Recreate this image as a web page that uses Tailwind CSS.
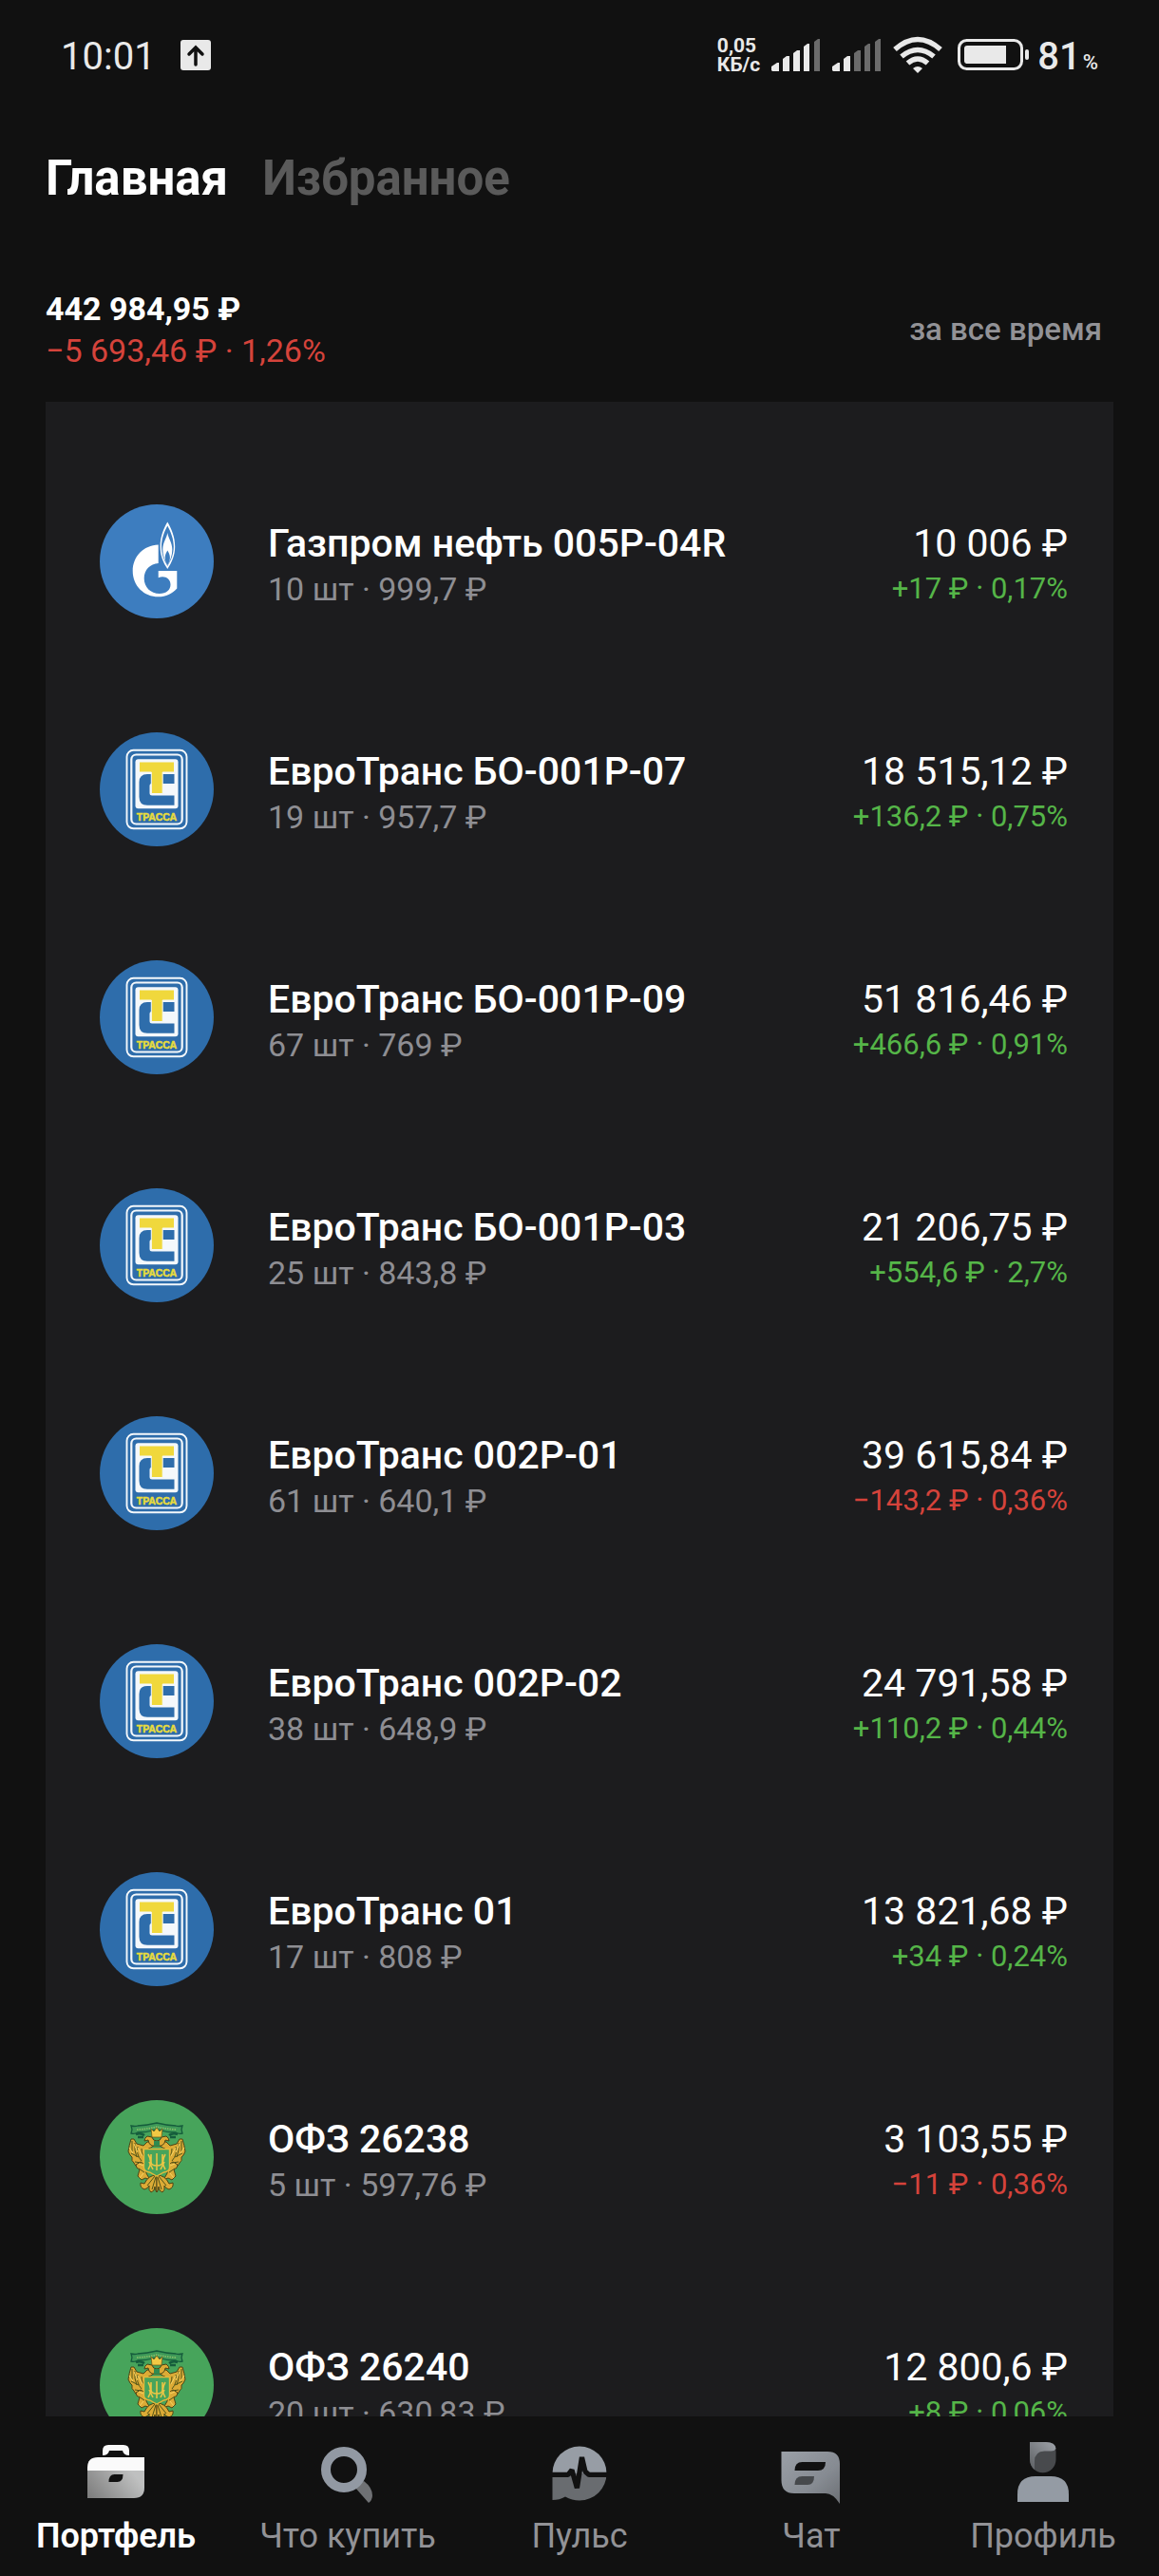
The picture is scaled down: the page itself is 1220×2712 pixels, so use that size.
<!DOCTYPE html>
<html lang="ru">
<head>
  <meta charset="UTF-8" />
  <meta name="viewport" content="width=device-width, initial-scale=1.0" />
  <title>Портфель</title>

  <!-- Tailwind CSS -->
  <script src="https://cdn.jsdelivr.net/npm/@tailwindcss/browser@4"></script>
</head>
<body class="h-screen flex flex-col overflow-hidden bg-[#111111] text-white font-[Roboto,sans-serif]">

  <!-- Logos -->
  <svg class="hidden" aria-hidden="true">
    <symbol id="gazprom" viewBox="0 0 120 120">
      <circle cx="60" cy="60" r="60" fill="#3d7dbf" />
      <path fill="#fff" d="M61.7 42.5C46 43 34.7 55 34.7 70c0 16 12 27.300 27 27.300 8 0 14.5-3.300 19.6-8.800V70H61.700v7.200c6.5-2.700 12.8.8 12.8 7.300 0 5.5-4.5 9.5-11.5 9.5C53.5 94 46.7 87 46.7 78c0-9 6.3-15.5 15-16z" />
      <path fill="#fff" fill-rule="evenodd" d="M71.3 18.5C67 26 63.6 34 63.6 44.5c0 9 3 16.5 7.7 23.5 4.7-7 7.900-14.5 7.900-23.5 0-10.5-3.600-18.500-7.900-26zm0 4c-3.800 7-6.300 14-6.300 22 0 7.500 2.300 14 6.300 20.500 4-6.500 6.500-13 6.500-20.500 0-8-2.700-15-6.500-22z" />
      <path fill="#fff" fill-rule="evenodd" d="M71.3 30c-1 6-5 10-5 17.5 0 6 2 11.5 5 17 3-5.5 5-11 5-17 0-7.5-4-11.5-5-17.5zm0 18.5c-1.300 2.500-2.600 4.500-2.600 7.500s1.200 5.500 2.600 8c1.400-2.500 2.600-5 2.600-8s-1.300-5-2.600-7.500z" />
    </symbol>

    <symbol id="trassa" viewBox="0 0 120 120">
      <circle cx="60" cy="60" r="60" fill="#2e6dab" />
      <rect x="28.5" y="18.8" width="63" height="82.5" rx="7" fill="none" stroke="#f4f8fb" stroke-width="1.9" />
      <rect x="33.3" y="23.5" width="53.4" height="73" rx="5" fill="none" stroke="#f4f8fb" stroke-width="2.2" />
      <rect x="37.5" y="28.3" width="45" height="52" rx="3" fill="#f4f8fb" />
      <path fill="#2e6dab" d="M78.5 44H50q-8.5 0-8.5 8.5V68q0 8.800 8.5 8.800h28.5V66.500H55q-2.500 0-2.500-2.500v-8q0-2 2-2h24z" />
      <path fill="#f0d83c" stroke="#f4f8fb" d="M41.5 31h37v11H66.200v22.5H54.300V42H41.500z" />
      <text x="60" y="92.500" text-anchor="middle" fill="#e8dc3c" stroke="#e8dc3c" stroke-width="0.5" font-family="Liberation Sans, sans-serif" font-weight="700" font-size="10.5">ТРАССА</text>
    </symbol>

    <symbol id="minfin" viewBox="0 0 120 120">
      <circle cx="60" cy="60" r="60" fill="#47a45b" />
      <path d="M33 27q4 1 7 0 10-.5 20-3 10 2.500 20 3 3 1 7 0l-1 4 1 4q-4 1-7-1-10 0-20-3-10 3-20 3-3 2-7 1l1-4z" fill="#3f9a58" stroke="#155c3c" stroke-width="1.300" />
      <path d="M39 31q11-.5 21-3 10 2.500 21 3" fill="none" stroke="#8cc06a" stroke-width="1.500" stroke-dasharray="1.500 1" />
      <path d="M38 36q5-2 9 1m35-1q-5-2-9 1M40 39h6m28 0h6" fill="none" stroke="#155c3c" stroke-width="2.500" />
      <g id="eagle-half">
        <g fill="#dcab36" stroke="#4c4414" stroke-width="1">
          <path d="M33 41q-2 6-3 13 2 5 4 6-1 4 2 6 1 4 5 4 3 3 8 1l1-16q-1-4 4-5l5-4v-2h-9l-4 4-7-2-3-5z" />
          <path d="M60 43q-4 0-5-4l-5-1q-3 2-3 5l4-1q0 4 4 6h5z" />
          <path d="M38 68q0 4 4 5l-2 7 4 4 4-2 5 2-4-7-1-9-5-3z" />
          <path d="M60 79q-9 0-13 9l-4-1q-1 5 4 7 4-1 5-4-1 5 2 7 4-1 4-6 0 4 2 6z" />
        </g>
        <path d="M34 43v11m3-9q-1 8 2 15m1-11q-2 8 4 15m0-13q0 7 5 11M33 56l8 4m-4 5l7 1m-3 6l6 4m3 14l8-10m-3 14l4-13" fill="none" stroke="#4f5418" stroke-width="1" />
        <path d="M31 50l4 6m1-10l4 9m0-5l5 9m-4 8l5 2m0 8l-4 5" fill="none" stroke="#f6d464" stroke-width="1" />
      </g>
      <use href="#eagle-half" transform="matrix(-1 0 0 1 120 0)" />
      <path d="M54 30l3 3 3-4 3 4 3-3-1 9H55z" fill="#f2c944" stroke="#6a5516" stroke-width=".7" />
      <path d="M57 43h6v5h-6z" fill="#2f8a50" />
      <path d="M46.500 51.500h27V71q0 4-6 5l-7.500 4-7.500-4q-6-1-6-5z" fill="#47a45b" stroke="#e6b93a" stroke-width="1.400" />
      <path d="M60 56v18m-6-17v8q0 4 6 4t6-4v-8M51 57q5 8 0 16m18-16q-5 8 0 16m-17-8l4 8m12-8l-4 8" fill="none" stroke="#e9c545" stroke-width="1.600" />
    </symbol>
  </svg>

  <!-- Status bar -->
  <div class="h-[120px] shrink-0 flex items-center justify-between px-16 text-[#e9e9e9]">
    <div class="flex items-center gap-[26px]">
      <span class="text-[40px] leading-12">10:01</span>
      <svg class="w-8 h-8 mb-1" viewBox="0 0 32 32">
        <rect width="32" height="32" rx="3" fill="#e9e9e9" />
        <path d="M16 26V8m-7 7l7-7 7 7" fill="none" stroke="#111" stroke-width="3.500" stroke-linecap="round" />
      </svg>
    </div>
    <div class="flex items-center gap-2">
      <div class="flex items-center gap-3 pb-1">
        <span class="text-[21px] leading-5 font-bold">0,05<br />КБ/с</span>
        <svg class="w-[52px] h-9" viewBox="0 0 52 36" fill="#e9e9e9">
          <path d="M0 34v-4l6-4h2v9H1z" />
          <path d="M12 35V22l4-3h3v16z" />
          <path d="M23 35V16l4-3h3v22z" />
          <path d="M34 35V9l4-3h2v29z" />
          <path d="M45 35V4l4-3h2v34z" fill="#6b6b6b" />
        </svg>
        <svg class="w-[52px] h-9" viewBox="0 0 52 36" fill="#6b6b6b">
          <path d="M0 34v-4l6-4h2v9H1z" fill="#e9e9e9" />
          <path d="M12 35V22l4-3h3v16z" fill="#e9e9e9" />
          <path d="M23 35V16l4-3h3v22z" />
          <path d="M34 35V9l4-3h2v29z" />
          <path d="M45 35V4l4-3h2v34z" />
        </svg>
        <svg class="w-[52px] h-10 mr-1" viewBox="0 0 52 40" fill="none" stroke="#e9e9e9" stroke-width="5.500">
          <path d="M2 14q24-21 48 0M9 21.500q17-14 34 0M15.500 28.500q10.500-9 21 0" />
          <path d="M21 34q5-4 10 0L26 39z" fill="#e9e9e9" stroke="none" />
        </svg>
        <svg class="w-[76px] h-9" viewBox="0 0 76 36">
          <rect x="1.500" y="2.500" width="66" height="30" rx="8" fill="none" stroke="#e9e9e9" stroke-width="3" />
          <path d="M10 8h41v19H10q-3 0-3-3V11q0-3 3-3z" fill="#e9e9e9" />
          <rect x="71" y="12" width="4" height="11" rx="2" fill="#e9e9e9" />
        </svg>
      </div>
      <p class="text-[40px] leading-12 font-medium">81<span class="pl-0.5 text-[22px] leading-none">%</span></p>
    </div>
  </div>

  <!-- Tabs -->
  <header class="shrink-0 px-12 pt-9">
    <nav class="flex gap-9 text-[51px] leading-16 font-bold">
      <a href="#main">Главная</a>
      <a href="#favorites" class="text-[#5a5a5a]">Избранное</a>
    </nav>

    <!-- Summary -->
    <div class="flex items-center justify-between mt-[83px] mb-8 pr-3 leading-11">
      <div class="text-[34px]">
        <p class="font-bold">442 984,95 ₽</p>
        <p class="text-[#d5433b]">−5 693,46 ₽ · 1,26%</p>
      </div>
      <button type="button" class="text-[33px] font-medium text-[#929296]">за все время</button>
    </div>
  </header>

  <!-- Positions -->
  <main class="flex-1 min-h-0 overflow-hidden px-12">
    <ul id="positions" class="min-h-full bg-[#1c1c1e] pt-12"></ul>
  </main>

  <!-- Bottom navigation -->
  <nav class="shrink-0 grid grid-cols-5 pt-6 pb-[18px] text-[36px] leading-12 text-[#929296]">
    <a href="#portfolio" class="flex flex-col items-center gap-1.5 font-semibold text-white">
      <svg class="w-[72px] h-[72px]" viewBox="0 0 72 72">
        <defs>
          <linearGradient id="case" x1="0" y1="1" x2="1" y2="0.600">
            <stop offset="0" stop-color="#7b7b7b" />
            <stop offset="1" stop-color="#bfc0c0" />
          </linearGradient>
        </defs>
        <path d="M22 17v-5q0-6 6-6h16q6 0 6 6v5q-6 0-7-5H29q-1 5-7 5z" fill="#fafafa" />
        <path d="M6 33v-3q0-11 11-11h49v14z" fill="#fafafa" />
        <path fill="url(#case)" fill-rule="evenodd" d="M6 33h60v18q0 11-11 11H6zm22.500 12h9q6 0 6-8h-9q-6 0-6 8z" />
      </svg>
      Портфель
    </a>
    <a href="#buy" class="flex flex-col items-center gap-1.5">
      <svg class="w-[72px] h-[72px]" viewBox="0 0 72 72">
        <path d="M44 51l9-7q9 7 9 15 0 5-4 8z" fill="#6f7174" />
        <circle cx="32" cy="32" r="19" fill="none" stroke="#9299a3" stroke-width="10" />
      </svg>
      Что купить
    </a>
    <a href="#pulse" class="flex flex-col items-center gap-1.5">
      <svg class="w-[72px] h-[72px]" viewBox="0 0 72 72">
        <path d="M7.500 36a28.500 28.500 0 0 1 57 0z" fill="#979da5" />
        <path d="M7.500 36h57A28.500 28.500 0 0 1 36 64.500q-8 0-15-4-6 3.500-13.500 3.500z" fill="#696c70" />
        <path d="M6 37.400h18l4-5 5.400 19L38.500 19 42 34l4 3.400h20" fill="none" stroke="#111" stroke-width="5.300" stroke-linejoin="bevel" />
      </svg>
      Пульс
    </a>
    <a href="#chat" class="flex flex-col items-center gap-1.5">
      <svg class="w-[72px] h-[72px]" viewBox="0 0 72 72">
        <defs>
          <linearGradient id="bubble" x1="0" y1="0" x2="1" y2="1">
            <stop offset="0" stop-color="#9ba0a7" />
            <stop offset="0.600" stop-color="#868b92" />
            <stop offset="1" stop-color="#6c6f74" />
          </linearGradient>
        </defs>
        <path d="M4.500 13H53q13 0 13 13v42q-7-11-15-11H18Q4.500 57 4.500 43z" fill="url(#bubble)" />
        <path d="M18.500 33q0-9 8-9H51q0 9-8 9z" fill="#111" />
        <path d="M18.500 48q0-9 8-9H39q0 9-7 9z" fill="#46494c" />
      </svg>
      Чат
    </a>
    <a href="#profile" class="flex flex-col items-center gap-1.5">
      <svg class="w-[72px] h-[72px]" viewBox="0 0 72 72">
        <defs>
          <linearGradient id="hair" x1="1" y1="0" x2="0" y2="1">
            <stop offset="0" stop-color="#a0a4aa" />
            <stop offset="1" stop-color="#5c5f63" />
          </linearGradient>
        </defs>
        <path d="M22 3h17q10.500 0 10.500 10v8.500a13.700 13.700 0 0 1-27.500 0z" fill="#484a4d" />
        <path d="M22 3h17q10 0 10.500 7-1.500 2.500-5 2.500h-7Q27 13 27 23v9q-5-4-5-11z" fill="url(#hair)" />
        <path d="M9 66V58q0-19 19-19h16q19 0 19 19v8z" fill="#949ba4" />
      </svg>
      Профиль
    </a>
  </nav>

  <script>
    const positions = [
      { logo: 'gazprom', name: 'Газпром нефть 005P-04R', info: '10 шт · 999,7 ₽', total: '10 006 ₽', change: '+17 ₽ · 0,17%' },
      { logo: 'trassa', name: 'ЕвроТранс БО-001Р-07', info: '19 шт · 957,7 ₽', total: '18 515,12 ₽', change: '+136,2 ₽ · 0,75%' },
      { logo: 'trassa', name: 'ЕвроТранс БО-001Р-09', info: '67 шт · 769 ₽', total: '51 816,46 ₽', change: '+466,6 ₽ · 0,91%' },
      { logo: 'trassa', name: 'ЕвроТранс БО-001Р-03', info: '25 шт · 843,8 ₽', total: '21 206,75 ₽', change: '+554,6 ₽ · 2,7%' },
      { logo: 'trassa', name: 'ЕвроТранс 002Р-01', info: '61 шт · 640,1 ₽', total: '39 615,84 ₽', change: '−143,2 ₽ · 0,36%' },
      { logo: 'trassa', name: 'ЕвроТранс 002Р-02', info: '38 шт · 648,9 ₽', total: '24 791,58 ₽', change: '+110,2 ₽ · 0,44%' },
      { logo: 'trassa', name: 'ЕвроТранс 01', info: '17 шт · 808 ₽', total: '13 821,68 ₽', change: '+34 ₽ · 0,24%' },
      { logo: 'minfin', name: 'ОФЗ 26238', info: '5 шт · 597,76 ₽', total: '3 103,55 ₽', change: '−11 ₽ · 0,36%' },
      { logo: 'minfin', name: 'ОФЗ 26240', info: '20 шт · 630,83 ₽', total: '12 800,6 ₽', change: '+8 ₽ · 0,06%' }
    ];

    const list = document.getElementById('positions');

    positions.forEach(p => {
      const changeColor = p.change.startsWith('+') ? 'text-[#55b548]' : 'text-[#d5433b]';

      list.insertAdjacentHTML('beforeend', `
        <li>
          <a href="#${p.logo}" class="h-60 flex items-center pl-[57px] pr-12 leading-12">
            <svg class="w-[120px] h-[120px] shrink-0" aria-hidden="true"><use href="#${p.logo}" /></svg>
            <div class="flex-1 pl-[57px] pt-2.5">
              <p class="text-[41px] font-medium">${p.name}</p>
              <p class="text-[34px] text-[#8e8e93]">${p.info}</p>
            </div>
            <div class="pt-2.5 text-right">
              <p class="text-[41px]">${p.total}</p>
              <p class="text-[31px] ${changeColor}">${p.change}</p>
            </div>
          </a>
        </li>`);
    });
  </script>
</body>
</html>
